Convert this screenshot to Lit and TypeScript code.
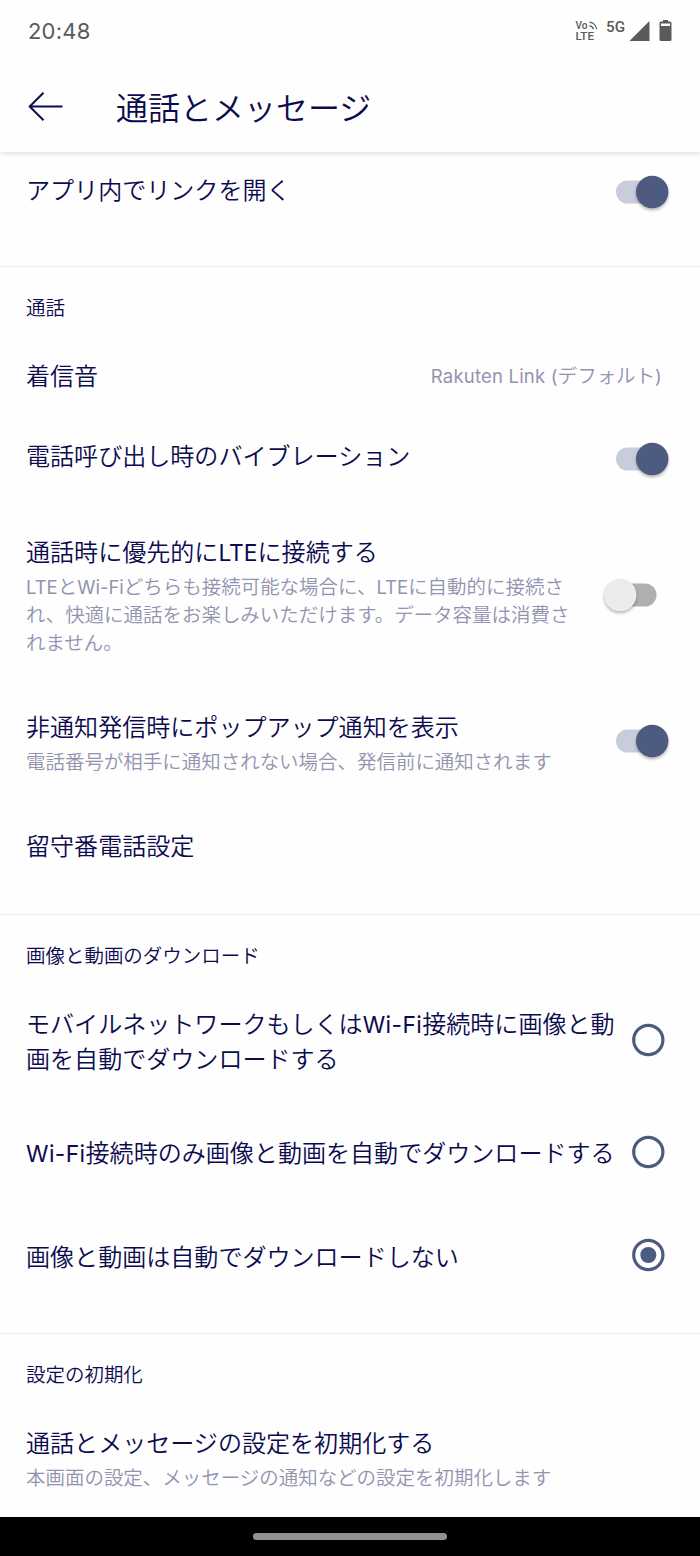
import { LitElement, html, css, svg, nothing } from "lit";
import { customElement, property } from "lit/decorators.js";

@customElement("toggle-switch")
class ToggleSwitch extends LitElement {
  @property({ type: Boolean }) on = false;

  static styles = css`
    :host { display: block; width: 68px; height: 44px; }
    svg { display: block; }
    .track { fill: #b0b0b0; }
    .track.on { fill: #c9cddb; }
    .thumb { fill: #ececec; filter: drop-shadow(0 2px 1.5px rgba(0, 0, 0, 0.28)); }
    .thumb.on { fill: #4d5b80; }
  `;

  render() {
    const state = this.on ? "on" : "";
    return html`<svg width="68" height="44" viewBox="0 0 68 44">
      <rect class="track ${state}" x="14" y="10.5" width="40.5" height="23" rx="11.5"></rect>
      <circle class="thumb ${state}" cx=${this.on ? 50.2 : 18.2} cy="22" r="16.2"></circle>
    </svg>`;
  }
}

@customElement("radio-mark")
class RadioMark extends LitElement {
  @property({ type: Boolean }) checked = false;

  static styles = css`
    :host { display: block; width: 34px; height: 34px; }
    svg { display: block; }
    .ring { fill: none; stroke: #4d5b80; stroke-width: 3.2; }
    .dot { fill: #4d5b80; }
  `;

  render() {
    return html`<svg width="34" height="34" viewBox="0 0 34 34">
      <circle class="ring" cx="17.3" cy="17" r="14.6"></circle>
      ${this.checked ? svg`<circle class="dot" cx="17.3" cy="17" r="8"></circle>` : nothing}
    </svg>`;
  }
}

@customElement("app-root")
class AppRoot extends LitElement {
  static styles = css`
    :host {
      display: flex;
      flex-direction: column;
      height: 1556px;
      overflow: hidden;
      background: #fefefe;
      color: #0b0b4e;
      font-family: "Noto Sans CJK JP", sans-serif;
      font-weight: 350;
    }
    * { box-sizing: border-box; }
    svg { display: block; }
    .latin {
      font-family: "Inter", sans-serif;
      font-size: 0.95em;
      font-weight: 400;
      line-height: 0;
    }
    .status {
      flex: none;
      height: 62px;
      padding: 0 27px 0 28px;
      display: flex;
      align-items: center;
      justify-content: space-between;
      color: #5a5a5a;
    }
    .clock { font: 400 22px/30px "Inter", sans-serif; letter-spacing: 0.2px; }
    .indicators { display: flex; }
    .volte { font: 500 10.5px/10px "Roboto", sans-serif; }
    .net { font: 500 15.5px/20px "Roboto", sans-serif; }
    .glyph { fill: #5a5a5a; }
    .wave { fill: none; stroke: #5a5a5a; stroke-width: 1.3; }
    .appbar {
      flex: none;
      height: 90px;
      padding: 0 28px;
      display: flex;
      align-items: center;
      gap: 53px;
      box-shadow: 0 1px 5px rgba(0, 0, 0, 0.16);
      clip-path: inset(0 0 -8px 0);
    }
    .back { fill: none; stroke: #0b0b4e; stroke-width: 2; }
    .heading { margin: 0; padding-bottom: 3px; font-size: 32px; line-height: 44px; font-weight: inherit; }
    .content { flex: 1; min-height: 0; overflow: hidden; }
    .section { border-bottom: 1px solid #ececee; }
    .section.links { padding-bottom: 34px; }
    .section.calls { padding-bottom: 30px; }
    .section.media { padding-bottom: 45px; }
    .section.reset { border: 0; }
    .label {
      margin: 0;
      height: 82px;
      padding-left: 26px;
      font-size: 19.48px;
      line-height: 80px;
      font-weight: inherit;
    }
    .row {
      display: flex;
      align-items: center;
      justify-content: space-between;
      padding: 0 30px 0 26px;
      height: 76px;
    }
    .row.radio { padding-right: 35px; }
    .row.link { height: 80px; }
    .row.tone { height: 54px; padding-right: 38px; }
    .row.vibrate { height: 112px; }
    .row.lte { height: 159px; }
    .row.popup { height: 134px; }
    .row.auto { height: 85px; }
    .row.wifi { height: 140px; }
    .row.never { height: 66px; }
    .row.init { height: 86px; }
    .radio .latin { letter-spacing: 0.4px; }
    .value .latin { letter-spacing: 0.2px; }
    .text { display: flex; flex-direction: column; gap: 4px; }
    .link .text { padding-bottom: 8px; }
    .vibrate .text { padding-bottom: 9px; }
    .tone .text, .voicemail .text { padding-bottom: 4px; }
    .lte .text { padding-bottom: 1px; }
    .wifi .text { padding-bottom: 2px; }
    .init .text { padding-bottom: 3px; }
    .title { font-size: 24.05px; line-height: 35px; white-space: nowrap; }
    .desc { font-size: 19.48px; line-height: 28px; color: #9393b0; white-space: nowrap; }
    .value { padding-bottom: 2px; font-size: 19.48px; line-height: 28px; color: #9393b0; white-space: nowrap; }
    .nav {
      flex: none;
      height: 39px;
      background: #000;
      display: flex;
      align-items: center;
      justify-content: center;
    }
    .pill { width: 194px; height: 7px; border-radius: 4px; background: #919191; }
  `;

  render() {
    const l = (t: string) => html`<span class="latin">${t}</span>`;
    return html`
      <div class="status">
        <div class="clock">20:48</div>
        <svg class="indicators" width="98" height="30" viewBox="0 0 98 30">
          <text class="volte glyph" x="0.5" y="12.5" textLength="12" lengthAdjust="spacingAndGlyphs">Vo</text>
          <text class="volte glyph" x="0.5" y="24" textLength="18.5" lengthAdjust="spacingAndGlyphs">LTE</text>
          <path class="wave" d="M14.5 6.2 A8 8 0 0 1 21.6 13.2 M14.5 9.6 A4.8 4.8 0 0 1 18.3 13.2"></path>
          <text class="net glyph" x="31" y="16" textLength="19" lengthAdjust="spacingAndGlyphs">5G</text>
          <path class="glyph" d="M54.5 25 L74.5 5 V25 Z"></path>
          <path class="glyph" fill-rule="evenodd" d="M88 4 H93 V5.5 H95 Q96.5 5.5 96.5 7 V23.5 Q96.5 25 95 25 H86 Q84.500 25 84.500 23.500 V7 Q84.500 5.500 86 5.500 H88 Z M86 7.500 V10 H95 V7.500 Z"></path>
        </svg>
      </div>
      <div class="appbar">
        <svg width="35" height="30" viewBox="0 0 35 30">
          <path class="back" d="M34.500 14.500 H2 M15.500 0.700 L1.700 14.500 L15.500 28.300"></path>
        </svg>
        <h1 class="heading">通話とメッセージ</h1>
      </div>
      <div class="content">
        <div class="section links">
          <div class="row link">
            <div class="text"><div class="title">アプリ内でリンクを開く</div></div>
            <toggle-switch on></toggle-switch>
          </div>
        </div>
        <div class="section calls">
          <h2 class="label">通話</h2>
          <div class="row tone">
            <div class="text"><div class="title">着信音</div></div>
            <div class="value">${l("Rakuten Link (")}デフォルト${l(")")}</div>
          </div>
          <div class="row vibrate">
            <div class="text"><div class="title">電話呼び出し時のバイブレーション</div></div>
            <toggle-switch on></toggle-switch>
          </div>
          <div class="row lte">
            <div class="text">
              <div class="title">通話時に優先的に${l("LTE")}に接続する</div>
              <div class="desc">${l("LTE")}と${l("Wi-Fi")}どちらも接続可能な場合に、${l("LTE")}に自動的に接続さ<br />れ、快適に通話をお楽しみいただけます。データ容量は消費さ<br />れません。</div>
            </div>
            <toggle-switch></toggle-switch>
          </div>
          <div class="row popup">
            <div class="text">
              <div class="title">非通知発信時にポップアップ通知を表示</div>
              <div class="desc">電話番号が相手に通知されない場合、発信前に通知されます</div>
            </div>
            <toggle-switch on></toggle-switch>
          </div>
          <div class="row voicemail">
            <div class="text"><div class="title">留守番電話設定</div></div>
          </div>
        </div>
        <div class="section media">
          <h2 class="label">画像と動画のダウンロード</h2>
          <div class="row radio auto">
            <div class="text"><div class="title">モバイルネットワークもしくは${l("Wi-Fi")}接続時に画像と動<br />画を自動でダウンロードする</div></div>
            <radio-mark></radio-mark>
          </div>
          <div class="row radio wifi">
            <div class="text"><div class="title">${l("Wi-Fi")}接続時のみ画像と動画を自動でダウンロードする</div></div>
            <radio-mark></radio-mark>
          </div>
          <div class="row radio never">
            <div class="text"><div class="title">画像と動画は自動でダウンロードしない</div></div>
            <radio-mark checked></radio-mark>
          </div>
        </div>
        <div class="section reset">
          <h2 class="label">設定の初期化</h2>
          <div class="row init">
            <div class="text">
              <div class="title">通話とメッセージの設定を初期化する</div>
              <div class="desc">本画面の設定、メッセージの通知などの設定を初期化します</div>
            </div>
          </div>
        </div>
      </div>
      <div class="nav"><div class="pill"></div></div>
    `;
  }
}
